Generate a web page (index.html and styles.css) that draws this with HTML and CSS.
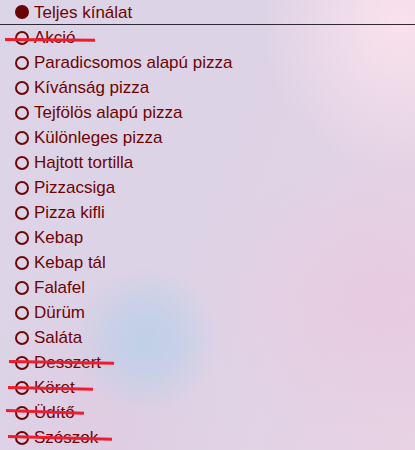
FILE: index.html
```html
<!DOCTYPE html>
<html lang="hu">
<head>
<meta charset="utf-8">
<title>Kínálat</title>
<link rel="stylesheet" href="styles.css">
</head>
<body>
<ul class="menu">
  <li class="item item-all"><span class="dot dot-full"></span><span class="label">Teljes kínálat</span></li>
  <li class="item struck s-akcio"><span class="dot"></span><span class="label">Akció</span></li>
  <li class="item"><span class="dot"></span><span class="label">Paradicsomos alapú pizza</span></li>
  <li class="item"><span class="dot"></span><span class="label">Kívánság pizza</span></li>
  <li class="item"><span class="dot"></span><span class="label">Tejfölös alapú pizza</span></li>
  <li class="item"><span class="dot"></span><span class="label">Különleges pizza</span></li>
  <li class="item"><span class="dot"></span><span class="label">Hajtott tortilla</span></li>
  <li class="item"><span class="dot"></span><span class="label">Pizzacsiga</span></li>
  <li class="item"><span class="dot"></span><span class="label">Pizza kifli</span></li>
  <li class="item"><span class="dot"></span><span class="label">Kebap</span></li>
  <li class="item"><span class="dot"></span><span class="label">Kebap tál</span></li>
  <li class="item"><span class="dot"></span><span class="label">Falafel</span></li>
  <li class="item"><span class="dot"></span><span class="label">Dürüm</span></li>
  <li class="item"><span class="dot"></span><span class="label">Saláta</span></li>
  <li class="item struck s-desszert"><span class="dot"></span><span class="label">Desszert</span></li>
  <li class="item struck s-koret"><span class="dot"></span><span class="label">Köret</span></li>
  <li class="item struck s-udito"><span class="dot"></span><span class="label">Üdítő</span></li>
  <li class="item struck s-szoszok"><span class="dot"></span><span class="label">Szószok</span></li>
</ul>
</body>
</html>
```
FILE: styles.css
```css
html, body {
  margin: 0;
  padding: 0;
  height: 100%;
}
body {
  font-family: "Liberation Sans", Arial, sans-serif;
  font-size: 17px;
  color: #6e0404;
  background:
    radial-gradient(circle at 146px 340px, rgba(188, 208, 232, 0.9) 0, rgba(188, 208, 232, 0.65) 32px, rgba(188, 208, 232, 0) 74px),
    radial-gradient(ellipse at 400px 20px, rgba(250, 226, 236, 1) 0, rgba(250, 226, 236, 0) 140px),
    radial-gradient(ellipse at 380px 300px, rgba(232, 202, 224, 0.9) 0, rgba(232, 202, 224, 0) 180px),
    radial-gradient(ellipse at 100px 420px, rgba(226, 200, 224, 0.6) 0, rgba(226, 200, 224, 0) 120px),
    linear-gradient(110deg, #dcd5e7 0%, #dcd3e6 45%, #e8d2e4 100%);
  overflow: hidden;
}
.menu {
  list-style: none;
  margin: 0;
  padding: 0;
}
.item {
  position: relative;
  display: flex;
  align-items: center;
  gap: 5px;
  height: 25px;
  padding-left: 15px;
  line-height: 25px;
}
.item-all {
  border-bottom: 1px solid #2e2a36;
  height: 24px;
}
.dot {
  box-sizing: border-box;
  width: 14px;
  height: 14px;
  border: 2.5px solid #6e0808;
  border-radius: 50%;
  flex: none;
}
.dot-full {
  background: #6a0505;
  border-color: #6a0505;
}
.struck::after {
  content: "";
  position: absolute;
  height: 3px;
  background: #ee1c2e;
  transform-origin: left center;
}
.s-akcio::after {
  left: 5px;
  top: 13px;
  width: 90px;
  transform: rotate(0.4deg);
}
.s-desszert::after {
  left: 9px;
  top: 10px;
  width: 105px;
  transform: rotate(0.9deg);
}
.s-koret::after {
  left: 8px;
  top: 11px;
  width: 85px;
  transform: rotate(1.2deg);
}
.s-udito::after {
  left: 6px;
  top: 9px;
  width: 78px;
  transform: rotate(2deg);
}
.s-szoszok::after {
  left: 8px;
  top: 10px;
  width: 104px;
  transform: rotate(1.5deg);
}
```
